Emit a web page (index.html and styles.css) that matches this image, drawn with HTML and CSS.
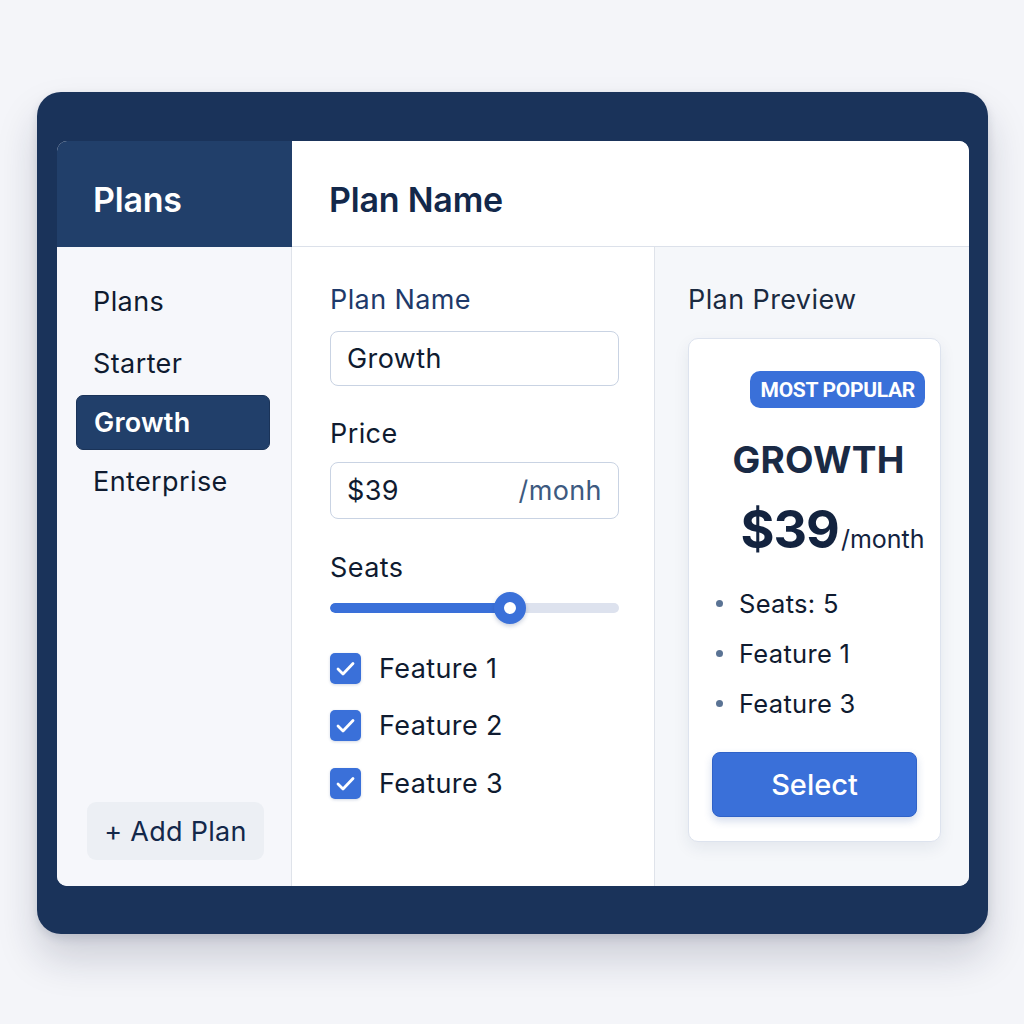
FILE: index.html
```html
<!DOCTYPE html>
<html>
<head>
<meta charset="utf-8">
<link rel="stylesheet" href="styles.css">
</head>
<body>
<div class="page">
  <div class="frame">
    <div class="card">
      <div class="side-head">Plans</div>
      <div class="main-head">Plan Name</div>
      <div class="sidebar">
        <div class="nav">
          <div class="nav-item">Plans</div>
          <div class="nav-item">Starter</div>
          <div class="nav-item active">Growth</div>
          <div class="nav-item">Enterprise</div>
        </div>
        <div class="add-btn">+ Add Plan</div>
      </div>
      <div class="form">
        <div class="label label-blue">Plan Name</div>
        <div class="input input-name">Growth</div>
        <div class="label label-price">Price</div>
        <div class="input input-price"><span>$39</span><span class="unit">/monh</span></div>
        <div class="label label-seats">Seats</div>
        <div class="slider">
          <div class="track"><div class="fill" style="width:62.4%"></div></div>
          <div class="thumb" style="left:62.4%"></div>
        </div>
        <div class="checks">
          <div class="check-row"><span class="box"><svg viewBox="0 0 31 31" width="31" height="31"><path d="M8 16l5 5L23 10.5" fill="none" stroke="#fff" stroke-width="2.8" stroke-linecap="round" stroke-linejoin="round"/></svg></span>Feature 1</div>
          <div class="check-row"><span class="box"><svg viewBox="0 0 31 31" width="31" height="31"><path d="M8 16l5 5L23 10.5" fill="none" stroke="#fff" stroke-width="2.8" stroke-linecap="round" stroke-linejoin="round"/></svg></span>Feature 2</div>
          <div class="check-row"><span class="box"><svg viewBox="0 0 31 31" width="31" height="31"><path d="M8 16l5 5L23 10.5" fill="none" stroke="#fff" stroke-width="2.8" stroke-linecap="round" stroke-linejoin="round"/></svg></span>Feature 3</div>
        </div>
      </div>
      <div class="preview">
        <div class="preview-title">Plan Preview</div>
        <div class="pcard">
          <div class="badge-row"><span class="badge">MOST POPULAR</span></div>
          <div class="pname">GROWTH</div>
          <div class="pprice"><span class="amount">$39</span><span class="per">/month</span></div>
          <ul class="plist">
            <li>Seats: 5</li>
            <li>Feature 1</li>
            <li>Feature 3</li>
          </ul>
          <div class="select-btn">Select</div>
        </div>
      </div>
    </div>
  </div>
</div>
</body>
</html>
```

FILE: styles.css
```css
* { box-sizing: border-box; }
html, body { margin: 0; padding: 0; }
body {
  background: #f4f5f9;
  font-family: Inter, "Noto Sans", "Liberation Sans", sans-serif;
  color: #0f1b30;
  width: 1024px;
  height: 1024px;
  overflow: hidden;
}
.page { padding: 92px 0 0 37px; }
.frame {
  width: 951px;
  height: 842px;
  background: #1a335a;
  border-radius: 24px;
  padding: 49px 19px 48px 20px;
  box-shadow: 0 24px 40px rgba(20, 30, 60, 0.18), 0 4px 10px rgba(20, 30, 60, 0.12);
}
.card {
  height: 745px;
  border-radius: 10px;
  overflow: hidden;
  background: #fff;
  display: grid;
  grid-template-columns: 235px 363px 1fr;
  grid-template-rows: 106px 1fr;
}
.side-head {
  background: #213f6a;
  color: #fff;
  font-size: 34px;
  font-weight: 600;
  padding: 10px 0 0 36px;
  display: flex;
  align-items: center;
  letter-spacing: -0.2px;
}
.main-head {
  grid-column: 2 / 4;
  background: #fff;
  border-bottom: 1px solid #dce1ea;
  font-size: 34px;
  font-weight: 600;
  color: #13284a;
  padding: 11px 0 0 37px;
  display: flex;
  align-items: center;
  letter-spacing: -0.2px;
}
.sidebar {
  background: #f6f7fb;
  border-right: 1px solid #dfe3ea;
  display: flex;
  flex-direction: column;
  padding: 27px 21px 26px 19px;
}
.nav { display: flex; flex-direction: column; gap: 4px; }
.nav-item {
  height: 55px;
  border-radius: 7px;
  padding-left: 17px;
  display: flex;
  align-items: center;
  font-size: 27px;
  letter-spacing: 0.4px;
  color: #0f1b30;
}
.nav-item:first-child { margin-bottom: 3px; }
.nav-item.active {
  background: #213f6a;
  color: #fff;
  font-weight: 600;
  letter-spacing: 0.2px;
  border: 1px solid #1a3358;
}
.add-btn {
  margin-top: auto;
  margin-left: 11px;
  width: 177px;
  height: 58px;
  border-radius: 9px;
  background: #eceff4;
  color: #13284a;
  font-size: 27px;
  letter-spacing: 0.3px;
  display: flex;
  align-items: center;
  justify-content: center;
}
.form {
  background: #fff;
  border-right: 1px solid #dfe3ea;
  padding: 37px 35px 0 38px;
  display: flex;
  flex-direction: column;
}
.label { font-size: 27px; letter-spacing: 0.4px; line-height: 32px; color: #0f1b30; }
.label-blue { color: #1e3a6a; }
.input {
  border: 1.5px solid #c9d3e3;
  border-radius: 8px;
  font-size: 27px;
  letter-spacing: 0.4px;
  padding: 0 16px;
  display: flex;
  align-items: center;
  justify-content: space-between;
  color: #0f1b30;
}
.input-name { height: 55px; margin-top: 15px; }
.label-price { margin-top: 32px; }
.input-price { height: 57px; margin-top: 12px; }
.unit { color: #3d5a80; }
.label-seats { margin-top: 33px; }
.slider { position: relative; height: 30px; margin-top: 9px; display: flex; align-items: center; }
.track { width: 100%; height: 10px; border-radius: 5px; background: #dde2ee; overflow: hidden; }
.fill { height: 100%; background: #3a70d9; border-radius: 5px; }
.thumb {
  position: absolute;
  top: 50%;
  width: 32px;
  height: 32px;
  margin: -16px 0 0 -16px;
  border-radius: 50%;
  background: #fff;
  border: 10px solid #3a70d9;
  box-shadow: 0 2px 4px rgba(30, 60, 120, 0.25);
}
.checks { margin-top: 25px; display: flex; flex-direction: column; gap: 17.5px; }
.check-row { height: 40px; display: flex; align-items: center; font-size: 27px; letter-spacing: 0.4px; gap: 18px; }
.box {
  width: 31px;
  height: 31px;
  border-radius: 5px;
  background: #3a70d9;
  box-shadow: 0 1px 3px rgba(30, 60, 120, 0.2);
  display: flex;
}
.preview {
  background: #f5f7fa;
  padding: 37px 28px 0 33px;
}
.preview-title { font-size: 27px; letter-spacing: 0.4px; line-height: 32px; color: #1a2a40; }
.pcard {
  margin-top: 22px;
  height: 504px;
  background: #fff;
  border: 1px solid #dde3ee;
  border-radius: 10px;
  box-shadow: 0 6px 16px rgba(30, 50, 90, 0.08);
  padding: 32px 15px 0 23px;
  display: flex;
  flex-direction: column;
}
.badge-row { display: flex; justify-content: flex-end; }
.badge {
  height: 37px;
  padding: 0 10px 0 11px;
  border-radius: 10px;
  background: #3a70d9;
  color: #fff;
  font-size: 21px;
  font-weight: 700;
  letter-spacing: -0.3px;
  display: flex;
  align-items: center;
  font-family: Roboto, Inter, sans-serif;
}
.pname {
  margin-top: 30px;
  text-align: center;
  font-size: 37px;
  line-height: 44px;
  font-weight: 700;
  color: #1a2a45;
  letter-spacing: 0.3px;
}
.pprice {
  margin-top: 18px;
  height: 60px;
  display: flex;
  align-items: baseline;
  justify-content: center;
  padding-left: 28px;
  color: #13233f;
}
.amount { font-size: 52px; font-weight: 700; line-height: 60px; letter-spacing: -1px; }
.per { font-size: 25px; margin-left: 2px; }
.plist { list-style: none; margin: 18px 0 0 0; padding: 0 0 0 4px; }
.plist li {
  height: 50px;
  display: flex;
  align-items: center;
  font-size: 25.5px;
  letter-spacing: 0.3px;
  color: #0f1b30;
}
.plist li::before {
  content: "";
  width: 7px;
  height: 7px;
  border-radius: 50%;
  background: #5a7394;
  margin-right: 16px;
}
.select-btn {
  margin-top: 24px;
  width: 205px;
  height: 65px;
  border-radius: 8px;
  background: #3a70d9;
  border: 1px solid #2f62c8;
  color: #fff;
  font-size: 29px;
  font-weight: 500;
  display: flex;
  align-items: center;
  justify-content: center;
  box-shadow: 0 4px 8px rgba(40, 80, 160, 0.2);
}
```
